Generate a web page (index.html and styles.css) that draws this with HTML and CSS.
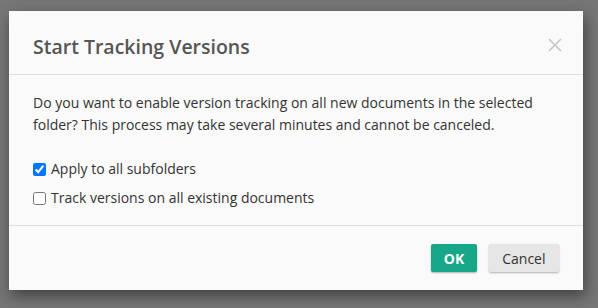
FILE: index.html
```html
<!DOCTYPE html>
<html lang="en">
<head>
	<meta charset="UTF-8" />
	<title>Start Tracking Versions</title>
	<link rel="stylesheet" href="styles.css">
</head>
<body>
	<div class="dialog">
		<div class="dialog-header">
			<h2>Start Tracking Versions</h2>
			<button class="close" aria-label="Close">
				<svg width="14" height="14" viewBox="0 0 14 14">
					<path d="M1 1L13 13M13 1L1 13" stroke="#c4c4c4" stroke-width="1.6" fill="none" />
				</svg>
			</button>
		</div>

		<div class="dialog-body">
			<p>Do you want to enable version tracking on all new documents in the selected folder? This process may take several minutes and cannot be canceled.</p>
			<label class="option"><input type="checkbox" checked> Apply to all subfolders</label>
			<label class="option"><input type="checkbox"> Track versions on all existing documents</label>
		</div>

		<div class="dialog-footer">
			<button class="btn btn-ok">OK</button>
			<button class="btn btn-cancel">Cancel</button>
		</div>
	</div>
</body>
</html>
```

FILE: styles.css
```css
body {
	margin: 0;
	padding: 11px 15px 18px 9px;
	background: #767676;
	font-family: "Open Sans", Arial, sans-serif;
	color: #333;
}

.dialog {
	width: 574px;
	background: #fafafa;
	box-shadow: 2px 6px 14px rgba(0, 0, 0, 0.45);
}

.dialog-header {
	display: flex;
	justify-content: space-between;
	align-items: flex-start;
	padding: 22px 21px 13px 24px;
	border-bottom: 1px solid #dedede;
}

h2 {
	margin: 0;
	font-size: 19.5px;
	line-height: 28px;
	font-weight: 600;
	color: #555;
}

.close {
	margin-top: 5px;
	padding: 0;
	border: none;
	background: none;
	width: 14px;
	height: 14px;
	display: block;
}

.close svg {
	display: block;
}

.dialog-body {
	padding: 17px 24px 16px;
	font-size: 14px;
	line-height: 22px;
}

.dialog-body p {
	margin: 0 0 22px;
}

.option {
	display: flex;
	align-items: center;
	gap: 5px;
	margin-bottom: 7px;
}

.option:last-child {
	margin-bottom: 0;
}

.option input {
	margin: 0;
	width: 13px;
	height: 13px;
}

.dialog-footer {
	display: flex;
	justify-content: flex-end;
	gap: 12px;
	padding: 18px 24px;
	border-top: 1px solid #dedede;
}

.btn {
	height: 28px;
	padding: 0 12.5px;
	border: none;
	border-radius: 2px;
	font-family: "Open Sans", Arial, sans-serif;
	font-size: 14px;
	box-shadow: 0 1px 2px rgba(0, 0, 0, 0.3);
}

.btn-ok {
	background: #18a689;
	color: #fff;
	font-weight: 700;
}

.btn-cancel {
	padding: 0 13.5px;
	background: #e6e6e6;
	color: #333;
}
```
